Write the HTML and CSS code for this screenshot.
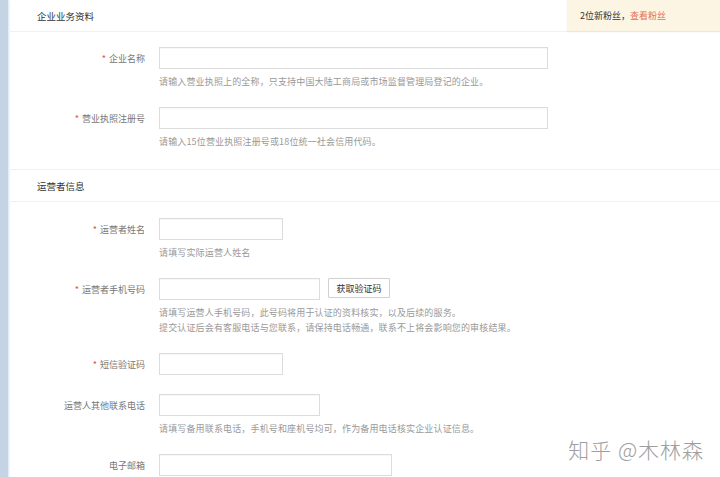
FILE: index.html
```html
<!DOCTYPE html>
<html lang="zh-CN">
<head>
<meta charset="utf-8">
<title>企业认证</title>
<link rel="stylesheet" href="styles.css">
</head>
<body>
<div class="page">
  <div class="strip"></div>
  <div class="main">
    <div class="notice">2位新粉丝，<a class="notice-link">查看粉丝</a></div>

    <div class="section-head">企业业务资料</div>
    <div class="fields">
      <div class="field">
        <div class="label"><span class="req">*</span> 企业名称</div>
        <div class="control">
          <div class="input-row"><span class="input w-xl"></span></div>
          <div class="help">请输入营业执照上的全称，只支持中国大陆工商局或市场监督管理局登记的企业。</div>
        </div>
      </div>
      <div class="field">
        <div class="label"><span class="req">*</span> 营业执照注册号</div>
        <div class="control">
          <div class="input-row"><span class="input w-xl"></span></div>
          <div class="help">请输入15位营业执照注册号或18位统一社会信用代码。</div>
        </div>
      </div>
    </div>

    <div class="section-head bordered">运营者信息</div>
    <div class="fields">
      <div class="field">
        <div class="label"><span class="req">*</span> 运营者姓名</div>
        <div class="control">
          <div class="input-row"><span class="input w-s"></span></div>
          <div class="help">请填写实际运营人姓名</div>
        </div>
      </div>
      <div class="field">
        <div class="label"><span class="req">*</span> 运营者手机号码</div>
        <div class="control">
          <div class="input-row"><span class="input w-m"></span><button class="btn">获取验证码</button></div>
          <div class="help">请填写运营人手机号码，此号码将用于认证的资料核实，以及后续的服务。<br>提交认证后会有客服电话与您联系，请保持电话畅通，联系不上将会影响您的审核结果。</div>
        </div>
      </div>
      <div class="field no-help">
        <div class="label"><span class="req">*</span> 短信验证码</div>
        <div class="control">
          <div class="input-row"><span class="input w-s"></span></div>
        </div>
      </div>
      <div class="field">
        <div class="label">运营人其他联系电话</div>
        <div class="control">
          <div class="input-row"><span class="input w-m"></span></div>
          <div class="help">请填写备用联系电话，手机号和座机号均可，作为备用电话核实企业认证信息。</div>
        </div>
      </div>
      <div class="field">
        <div class="label">电子邮箱</div>
        <div class="control">
          <div class="input-row"><span class="input w-l"></span></div>
        </div>
      </div>
    </div>

    <div class="watermark">知乎 @木林森</div>
  </div>
</div>
</body>
</html>
```

FILE: styles.css
```css
* { box-sizing: border-box; }
html, body { margin: 0; padding: 0; background: #fff; }
body {
  font-family: "Noto Sans CJK SC", "Noto Sans", sans-serif;
  font-size: 9px;
  color: #666;
  overflow: hidden;
}
.page { display: flex; min-height: 477px; }
.strip {
  width: 8px;
  flex: none;
  background: #c4d4e5;
  box-shadow: 1px 0 2px rgba(180, 200, 225, 0.5);
}
.main { flex: 1; position: relative; }

.notice {
  position: absolute;
  top: 0;
  right: 0;
  width: 153px;
  height: 31px;
  padding-left: 13px;
  display: flex;
  align-items: center;
  background: #fdf5e3;
  color: #333;
  font-size: 9px;
  box-shadow: 0 1px 2px rgba(0, 0, 0, 0.06);
}
.notice-link { color: #e2704f; }

.section-head {
  height: 32px;
  padding-left: 29px;
  display: flex;
  align-items: center;
  font-size: 9.5px;
  color: #333;
  border-bottom: 1px solid #f1f1f1;
}
.section-head.bordered { border-top: 1px solid #f1f1f1; height: 33px; margin-top: 20px; }

.fields { padding-top: 15px; }
.section-head.bordered + .fields { padding-top: 16px; }
.field { display: flex; margin-bottom: 18px; }
.field.no-help { margin-bottom: 19px; }
.label {
  width: 137px;
  flex: none;
  height: 22px;
  margin-right: 14px;
  display: flex;
  align-items: center;
  justify-content: flex-end;
  color: #777;
  white-space: nowrap;
}
.req { color: #e0503a; margin-right: 3px; }
.control { display: flex; flex-direction: column; }
.input-row { display: flex; align-items: flex-start; gap: 8px; }
.input {
  display: block;
  height: 22px;
  border: 1px solid #dcdcdc;
  background: #fff;
  box-shadow: inset 0 1px 1px rgba(0, 0, 0, 0.03);
}
.w-xl { width: 389px; }
.w-l { width: 233px; }
.w-m { width: 161px; }
.w-s { width: 124px; }
.btn {
  height: 20px;
  width: 62px;
  padding: 0;
  border: 1px solid #d0d0d0;
  border-radius: 1px;
  background: #fff;
  color: #333;
  font-family: inherit;
  font-size: 9px;
}
.help {
  margin-top: 5px;
  line-height: 15px;
  color: #999;
  letter-spacing: 0.15px;
  white-space: nowrap;
}

.watermark {
  position: absolute;
  right: 16px;
  top: 434px;
  font-size: 21px;
  color: #9e9e9e;
  letter-spacing: 1px;
  text-shadow: 0 0 2px #fff, 0 0 2px #fff;
  font-weight: 300;
}
```
